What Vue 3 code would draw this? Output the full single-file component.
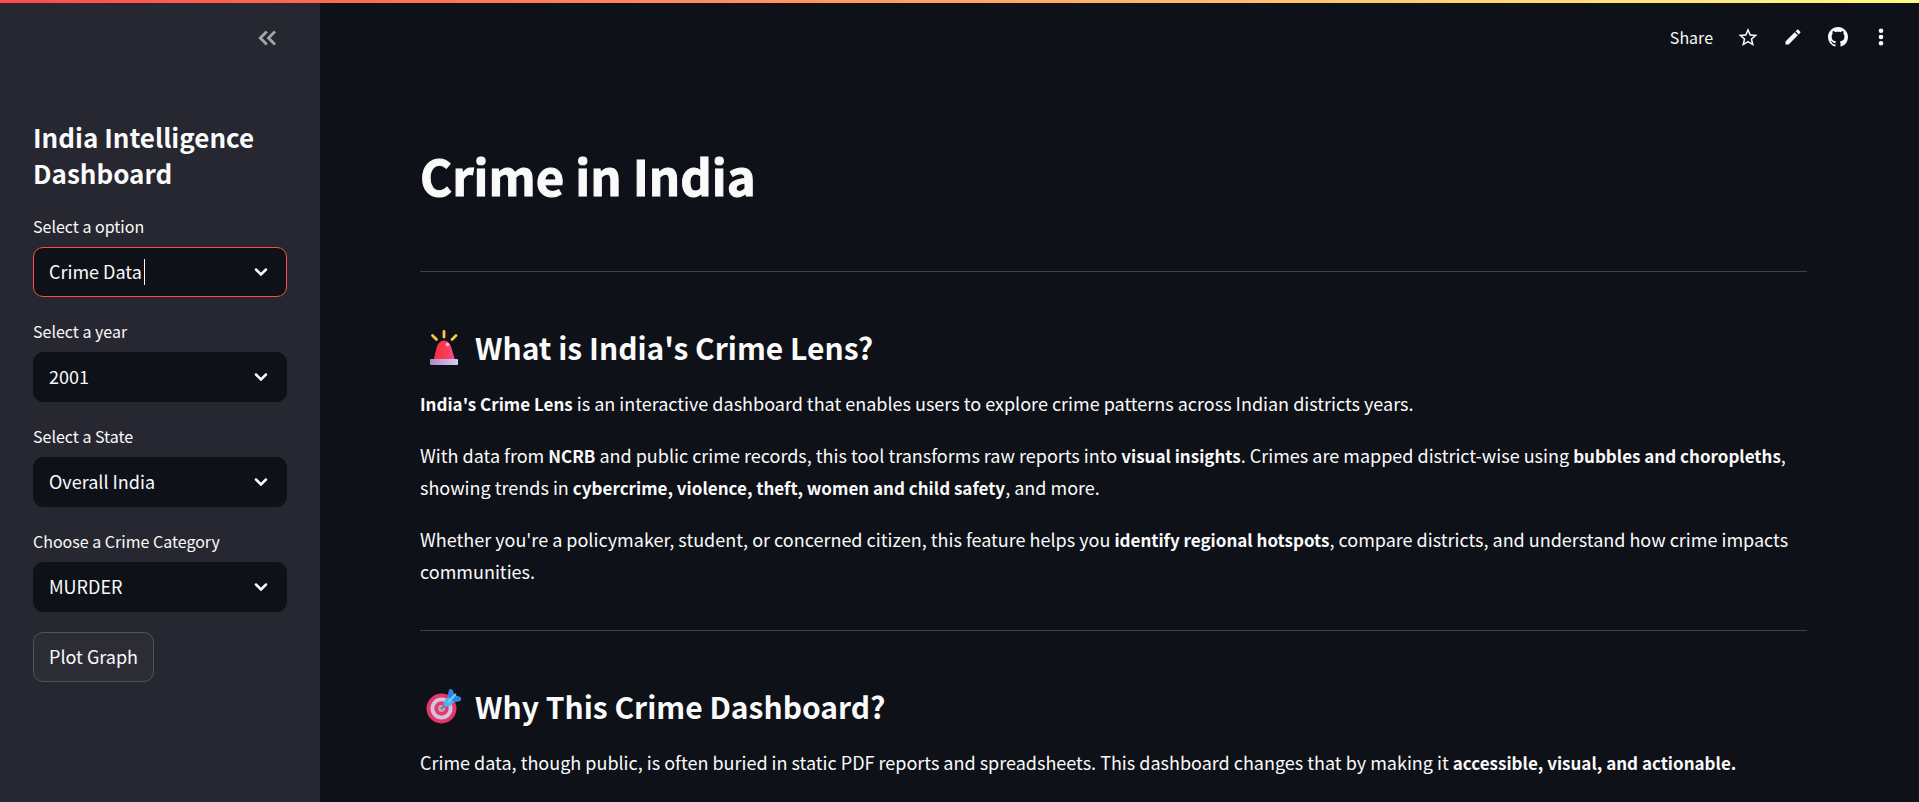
<script setup>
import { ref } from 'vue'

const mode = ref('Crime Data')
const filters = ref([
  { id: 'year', label: 'Select a year', value: '2001', options: ['2001', '2002', '2003'] },
  { id: 'state', label: 'Select a State', value: 'Overall India', options: ['Overall India', 'Delhi', 'Kerala'] },
  { id: 'category', label: 'Choose a Crime Category', value: 'MURDER', options: ['MURDER', 'THEFT', 'RIOTS'] }
])
</script>

<template>
  <div class="app">
    <div class="stripe"></div>

    <aside class="sidebar">
      <div class="sidebar-head">
        <button class="icon-btn collapse" type="button" aria-label="Collapse sidebar">
          <svg width="24" height="24" viewBox="0 0 24 24" fill="none" stroke="currentColor" stroke-width="2.9">
            <path d="M11.800 5.500 5.300 12l6.500 6.500M20 5.500 13.500 12l6.500 6.500" />
          </svg>
        </button>
      </div>

      <form class="controls" @submit.prevent>
        <h2>India Intelligence Dashboard</h2>

        <div class="field">
          <label for="mode">Select a option</label>
          <div class="box active">
            <input id="mode" v-model="mode" type="text" role="combobox" aria-expanded="false" autocomplete="off" />
            <span class="caret"></span>
            <svg class="chevron" width="20" height="20" viewBox="0 0 20 20"><path d="M5 7.500 10 12.500 15 7.500" /></svg>
          </div>
        </div>

        <div v-for="f in filters" :key="f.id" class="field">
          <label :for="f.id">{{ f.label }}</label>
          <div class="box">
            <select :id="f.id" v-model="f.value">
              <option v-for="o in f.options" :key="o">{{ o }}</option>
            </select>
            <svg class="chevron" width="20" height="20" viewBox="0 0 20 20"><path d="M5 7.500 10 12.500 15 7.500" /></svg>
          </div>
        </div>

        <button class="plot" type="submit">Plot Graph</button>
      </form>
    </aside>

    <div class="page">
      <header class="toolbar">
        <button class="icon-btn share" type="button">Share</button>
        <button class="icon-btn" type="button" aria-label="Favorite">
          <svg width="20" height="20" viewBox="1.500 1 21 21" fill="currentColor">
            <path d="M22 9.240l-7.190-.62L12 2 9.190 8.630 2 9.240l5.460 4.730L5.820 21 12 17.270 18.180 21l-1.630-7.030L22 9.240zM12 15.400l-3.760 2.270 1-4.280-3.320-2.880 4.380-.38L12 6.100l1.710 4.040 4.380.38-3.320 2.880 1 4.280L12 15.400z" />
          </svg>
        </button>
        <button class="icon-btn" type="button" aria-label="Edit">
          <svg width="20" height="20" viewBox="0 0 24 24" fill="currentColor">
            <path d="M3 17.250V21h3.750L17.810 9.940l-3.750-3.750L3 17.250zM20.710 7.040a1 1 0 0 0 0-1.410l-2.340-2.340a1 1 0 0 0-1.410 0l-1.830 1.830 3.750 3.750 1.830-1.830z" />
          </svg>
        </button>
        <button class="icon-btn" type="button" aria-label="View source on GitHub">
          <svg width="20" height="20" viewBox="0 0 16 16" fill="currentColor">
            <path d="M8 0C3.580 0 0 3.580 0 8c0 3.540 2.290 6.530 5.470 7.590.4.070.55-.17.55-.38 0-.19-.01-.82-.01-1.490-2.010.37-2.530-.49-2.690-.94-.09-.23-.48-.94-.82-1.130-.28-.15-.68-.52-.01-.53.63-.01 1.080.58 1.230.82.72 1.210 1.870.87 2.330.66.07-.52.28-.87.51-1.070-1.780-.2-3.640-.89-3.640-3.950 0-.87.31-1.590.82-2.150-.08-.2-.36-1.020.08-2.120 0 0 .67-.21 2.200.82.64-.18 1.320-.27 2-.27s1.360.09 2 .27c1.530-1.040 2.200-.82 2.200-.82.44 1.100.16 1.920.08 2.120.51.56.82 1.270.82 2.150 0 3.070-1.870 3.750-3.650 3.950.29.25.54.73.54 1.480 0 1.070-.01 1.930-.01 2.200 0 .21.15.46.55.38A8.010 8.010 0 0 0 16 8c0-4.420-3.580-8-8-8z" />
          </svg>
        </button>
        <button class="icon-btn" type="button" aria-label="More options">
          <svg width="16" height="20" viewBox="0 0 16 20" fill="currentColor">
            <circle cx="8" cy="3.700" r="2.300" /><circle cx="8" cy="10" r="2.300" /><circle cx="8" cy="16.300" r="2.300" />
          </svg>
        </button>
      </header>

      <main>
        <h1>Crime in India</h1>
        <hr />
        <section>
          <h3>
            <svg class="emoji" width="36" height="36" viewBox="0 0 36 36" aria-hidden="true">
              <defs>
                <linearGradient id="dome" x1="0" x2="1"><stop offset="0" stop-color="#f5303c" /><stop offset=".5" stop-color="#fb3a52" /><stop offset="1" stop-color="#f0508c" /></linearGradient>
                <linearGradient id="base" x1="0" x2="1"><stop offset="0" stop-color="#a98bc4" /><stop offset="1" stop-color="#dccdf2" /></linearGradient>
              </defs>
              <path d="M6.500 6.500 10.500 10.500M18 2.500V8M30 6.500 26 10.500" stroke="#fcc444" stroke-width="2.800" stroke-linecap="round" />
              <path d="M7.500 31 10.500 19Q12.500 11.500 18 11.500T25.500 19L29 31Z" fill="url(#dome)" />
              <circle cx="21.500" cy="15.500" r="1.800" fill="#ffb3c8" />
              <rect x="4" y="30" width="28" height="6" rx="1" fill="url(#base)" />
            </svg>
            <span>What is India's Crime Lens?</span>
          </h3>
          <p><strong>India's Crime Lens</strong> is an interactive dashboard that enables users to explore crime patterns across Indian districts years.</p>
          <p>With data from <strong>NCRB</strong> and public crime records, this tool transforms raw reports into <strong>visual insights</strong>. Crimes are mapped district-wise using <strong>bubbles and choropleths</strong>, showing trends in <strong>cybercrime, violence, theft, women and child safety</strong>, and more.</p>
          <p>Whether you're a policymaker, student, or concerned citizen, this feature helps you <strong>identify regional hotspots</strong>, compare districts, and understand how crime impacts communities.</p>
        </section>
        <hr />
        <section>
          <h3>
            <svg class="emoji" width="36" height="36" viewBox="0 0 36 36" aria-hidden="true">
              <circle cx="15.500" cy="20.500" r="15" fill="#e3366a" />
              <circle cx="15.500" cy="20.500" r="11" fill="#d3c4e2" />
              <circle cx="15.500" cy="20.500" r="7.200" fill="#e8386a" />
              <circle cx="15.500" cy="20.500" r="3.400" fill="#b8a8c8" />
              <path d="M15 21 20 16" stroke="#6b6478" stroke-width="1.600" />
              <path d="M18 18Q17 14 20 11L22 9 23 2Q25 0 27 3L28 7 34 9Q36 11 34 13L28 14 24 18Q21 19 18 18Z" fill="#45b4f5" />
              <path d="M22 8.500 23 2Q25 0 27 3L27.500 7 24 11ZM28 14 25.500 11.500 29 8 34 9Q36 11 34 13Z" fill="#2a86e0" />
              <path d="M22 14 30 6" stroke="#76d0fb" stroke-width="1.800" />
            </svg>
            <span>Why This Crime Dashboard?</span>
          </h3>
          <p>Crime data, though public, is often buried in static PDF reports and spreadsheets. This dashboard changes that by making it <strong>accessible, visual, and actionable.</strong></p>
        </section>
      </main>
    </div>
  </div>
</template>

<style>
body {
  margin: 0;
  background: #0e1117;
}
</style>

<style scoped>
.app {
  position: relative;
  display: flex;
  height: 100vh;
  overflow: hidden;
  background: #0e1117;
  color: #fafafa;
  font-family: "Noto Sans CJK SC", "Noto Sans", sans-serif;
  font-size: 18px;
  line-height: 32px;
}
.stripe {
  position: absolute;
  top: 0;
  left: 0;
  right: 0;
  height: 3px;
  z-index: 2;
  background: linear-gradient(90deg, #ff4b4b, #fffd80);
}
.sidebar {
  flex: 0 0 320px;
  box-sizing: border-box;
  padding: 0 33px;
  background: #262730;
}
.sidebar-head {
  display: flex;
  justify-content: flex-end;
  align-items: center;
  height: 76px;
  margin-bottom: 43px;
  padding-right: 8px;
}
.icon-btn {
  display: flex;
  align-items: center;
  justify-content: center;
  padding: 0;
  border: 0;
  background: none;
  color: inherit;
  font: inherit;
  cursor: pointer;
}
.collapse {
  color: #a3a4a8;
}
.controls {
  display: flex;
  flex-direction: column;
  align-items: stretch;
  gap: 20px;
}
h1, h2, h3, p {
  margin: 0;
  font-weight: 700;
}
h2 {
  padding-bottom: 1px;
  font-size: 26px;
  line-height: 36px;
}
label {
  display: block;
  margin-bottom: 7px;
  font-size: 16px;
  line-height: 28px;
}
.box {
  position: relative;
  height: 50px;
}
.box input,
.box select {
  display: block;
  width: 100%;
  height: 100%;
  box-sizing: border-box;
  padding: 0 48px 2px 15px;
  border: 1px solid #0e1117;
  border-radius: 10px;
  outline: 0;
  appearance: none;
  background: #0e1117;
  color: inherit;
  font: inherit;
}
.box.active input {
  border-color: #ff4b4b;
}
.caret {
  position: absolute;
  top: 12px;
  left: 111px;
  width: 1px;
  height: 26px;
  background: #fafafa;
}
.chevron {
  position: absolute;
  top: 15px;
  right: 16px;
  fill: none;
  stroke: #fafafa;
  stroke-width: 2.5;
  stroke-linecap: round;
  pointer-events: none;
}
.plot {
  align-self: flex-start;
  height: 50px;
  padding: 0 15px 2px;
  border: 1px solid #53545b;
  border-radius: 10px;
  background: #2b2c36;
  color: inherit;
  font: inherit;
  cursor: pointer;
}
.page {
  flex: 1;
  min-width: 0;
}
.toolbar {
  display: flex;
  align-items: center;
  justify-content: flex-end;
  gap: 25px;
  height: 74px;
  padding-right: 30px;
}
.share {
  font-size: 16px;
}
main {
  padding: 68px 112px 0 100px;
}
h1 {
  font-size: 49px;
  line-height: 66px;
  -webkit-text-stroke: 1px #fafafa;
}
hr {
  height: 1px;
  margin: 43px 0 54px;
  border: 0;
  background: #404144;
}
h1 + hr {
  margin-top: 63px;
}
h3 {
  display: flex;
  align-items: center;
  gap: 13px;
  margin-bottom: 19px;
  padding-left: 6px;
  font-size: 30px;
  line-height: 42px;
}
p {
  font-weight: 400;
}
p + p {
  margin-top: 20px;
}
strong {
  font-size: 17px;
  font-weight: 700;
  line-height: 24px;
}
</style>
